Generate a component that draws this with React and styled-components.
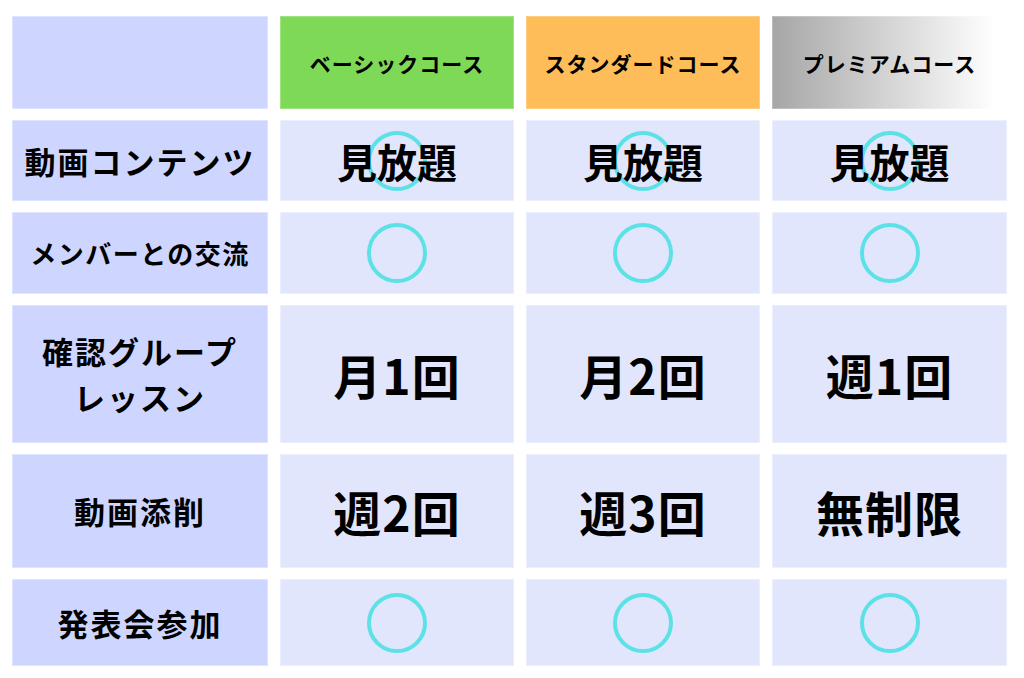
import React from "react"
import styled, { createGlobalStyle } from "styled-components"

const GlobalStyle = createGlobalStyle`
  body {
    margin: 0;
    background: #ffffff;
    font-family: "Noto Sans CJK JP", "Noto Sans", sans-serif;
  }
`

const headers = [
  { label: "ベーシックコース", tone: "basic" },
  { label: "スタンダードコース", tone: "standard" },
  { label: "プレミアムコース", tone: "premium" },
]

// h = row height, size = label font size
const rows = [
  { label: "動画コンテンツ", h: 81, values: ["見放題", "見放題", "見放題"], ring: true },
  { label: "メンバーとの交流", h: 82, size: 26, values: [null, null, null] },
  { label: "確認グループ\nレッスン", h: 138, values: ["月1回", "月2回", "週1回"], big: true },
  { label: "動画添削", h: 114, values: ["週2回", "週3回", "無制限"], big: true },
  { label: "発表会参加", h: 87, values: [null, null, null] },
]

const headerBg = {
  basic: "#7ed957",
  standard: "#ffbd59",
  premium: "linear-gradient(90deg, #a6a6a6 0%, #d0d0d0 45%, #ffffff 95%)",
}

const App = () => {
  return (
    <>
      <GlobalStyle />
      <Table rows={rows.map((r) => r.h)}>
        <LabelCell />
        {headers.map((h) => (
          <HeadCell key={h.label} tone={h.tone}>
            {h.label}
          </HeadCell>
        ))}
        {rows.map((row) => (
          <React.Fragment key={row.label}>
            <LabelCell size={row.size}>{row.label}</LabelCell>
            {row.values.map((v, i) => (
              <ValueCell key={i}>
                {v === null ? (
                  <Ring />
                ) : (
                  <>
                    {row.ring && <Ring overlay />}
                    <Value big={row.big}>{v}</Value>
                  </>
                )}
              </ValueCell>
            ))}
          </React.Fragment>
        ))}
      </Table>
    </>
  )
}

const Table = styled.div`
  display: grid;
  grid-template-columns: 256px 234px 234px 235px;
  grid-template-rows: 93px ${(p) => p.rows.map((h) => `${h}px`).join(" ")};
  column-gap: 12px;
  row-gap: 11px;
  padding: 16px 12px;
`

const Cell = styled.div`
  position: relative;
  display: flex;
  align-items: center;
  justify-content: center;
  box-sizing: border-box;
  border: 1px solid rgba(255, 255, 255, 0.35);
  background-origin: border-box;
  color: #000;
  font-weight: 700;
  text-align: center;
`

const LabelCell = styled(Cell)`
  background: #ced6ff;
  font-size: ${(p) => p.size || 31}px;
  letter-spacing: ${(p) => (p.size ? 1.5 : 2)}px;
  line-height: 46px;
  white-space: pre-line;
`

const HeadCell = styled(Cell)`
  background: ${(p) => headerBg[p.tone]};
  background-origin: border-box;
  border-color: rgba(255, 255, 255, 0.25);
  font-size: 21px;
  letter-spacing: 1px;
`

const ValueCell = styled(Cell)`
  background: #e2e6fd;
`

const Value = styled.span`
  position: relative;
  font-size: ${(p) => (p.big ? 48 : 40)}px;
  letter-spacing: ${(p) => (p.big ? 1 : 0)}px;
  line-height: 1;
`

const Ring = styled.div`
  width: 60px;
  height: 60px;
  box-sizing: border-box;
  border: 4.5px solid #5ce1e6;
  border-radius: 50%;
  ${(p) =>
    p.overlay &&
    `
    position: absolute;
    left: 50%;
    top: 50%;
    transform: translate(-50%, -50%);
  `}
`

export default App
